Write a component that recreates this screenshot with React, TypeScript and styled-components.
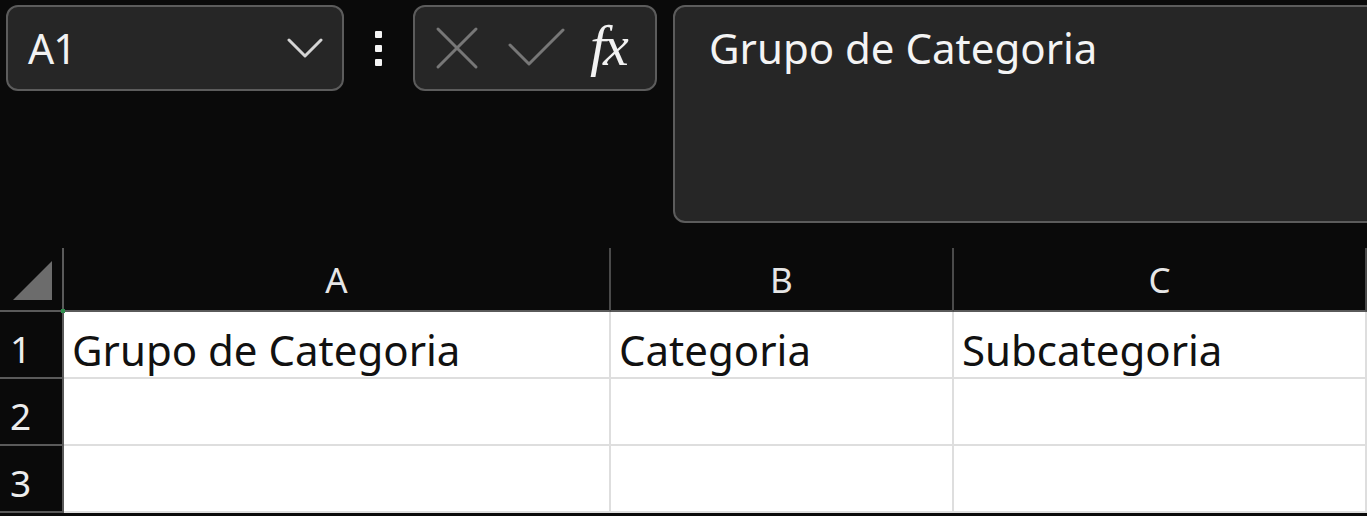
import React from 'react';
import styled, { createGlobalStyle } from 'styled-components';

const GlobalStyle = createGlobalStyle`
    html, body {
        margin: 0;
        padding: 0;
        background: #0a0a0a;
        overflow: hidden;
    }
    body {
        font-family: "Noto Sans", "Open Sans", sans-serif;
    }
`;

const Page = styled.div`
    width: 1367px;
    height: 516px;
    overflow: hidden;
    background: #0a0a0a;
`;

const TopBar = styled.div`
    height: 248px;
    display: flex;
    align-items: flex-start;
    padding: 5px 0 0 6px;
    box-sizing: border-box;
    & > * {
        flex-shrink: 0;
    }
`;

const NameBox = styled.div`
    width: 338px;
    height: 86px;
    box-sizing: border-box;
    border: 2px solid #5c5c5c;
    border-radius: 12px;
    background: #262626;
    display: flex;
    align-items: center;
    justify-content: space-between;
    padding: 0 19px 0 20px;
    color: #f2f2f2;
    font-size: 41px;
    letter-spacing: -1px;
`;

const DotsArea = styled.div`
    width: 69px;
    height: 86px;
    display: flex;
    flex-direction: column;
    align-items: center;
    justify-content: center;
    gap: 7px;
`;

const Dot = styled.span`
    width: 7px;
    height: 7px;
    background: #f4f4f4;
    border-radius: 1px;
`;

const FxBox = styled.div`
    width: 244px;
    height: 86px;
    box-sizing: border-box;
    border: 2px solid #5c5c5c;
    border-radius: 12px;
    background: #262626;
    display: flex;
    align-items: center;
    padding: 0 0 0 20px;
`;

const IconSlot = styled.div<{ $w: number }>`
    width: ${p => p.$w}px;
    display: flex;
    align-items: center;
`;

const FxLabel = styled.span`
    font-family: "Liberation Serif", "DejaVu Serif", serif;
    font-style: italic;
    font-size: 58px;
    color: #f2f2f2;
    line-height: 1;
    letter-spacing: -3px;
    margin-left: -2px;
    margin-top: -4px;
`;

const FormulaBar = styled.div`
    margin-left: 16px;
    width: 760px;
    height: 218px;
    box-sizing: border-box;
    border: 2px solid #5c5c5c;
    border-radius: 12px;
    background: #262626;
    padding: 16px 0 0 34px;
    color: #f4f4f4;
    font-size: 42px;
    line-height: 1.2;
`;

const Grid = styled.div`
    display: grid;
    grid-template-columns: 64px 547px 343px 1fr;
    grid-auto-rows: 67px;
    grid-template-rows: 64px;
`;

const Corner = styled.div`
    background: #0a0a0a;
    border-right: 2px solid #5a5a5a;
    border-bottom: 2px solid #5a5a5a;
    box-sizing: border-box;
    position: relative;
    display: flex;
    align-items: flex-end;
    padding: 0 0 9px 13px;
`;

const ColHead = styled.div`
    background: #0a0a0a;
    border-right: 2px solid #4a4a4a;
    border-bottom: 2px solid #5a5a5a;
    box-sizing: border-box;
    color: #e6e6e6;
    font-size: 35px;
    display: flex;
    align-items: flex-end;
    justify-content: center;
    padding-bottom: 13px;
    line-height: 1;
`;

const RowHead = styled.div`
    background: #0a0a0a;
    border-right: 2px solid #5a5a5a;
    border-bottom: 2px solid #5a5a5a;
    box-sizing: border-box;
    color: #ededed;
    font-size: 37px;
    display: flex;
    align-items: flex-end;
    padding: 0 0 10px 10px;
    line-height: 1;
`;

const Cell = styled.div`
    background: #ffffff;
    border-right: 2px solid #dedede;
    border-bottom: 2px solid #dedede;
    box-sizing: border-box;
    color: #111111;
    font-size: 42px;
    display: flex;
    align-items: flex-end;
    padding: 0 0 2px 8px;
    line-height: 1.2;
    white-space: nowrap;
    overflow: hidden;
`;

const SelectMark = styled.span`
    position: absolute;
    right: -3px;
    bottom: -3px;
    width: 4px;
    height: 4px;
    background: #2f8f4f;
`;

const Chevron = () => (
    <svg width="36" height="22" viewBox="0 0 36 22">
        <path d="M2 3 L18 19 L34 3" fill="none" stroke="#d4d4d4" strokeWidth="3" strokeLinecap="round" strokeLinejoin="round" />
    </svg>
);

const CrossIcon = () => (
    <svg width="44" height="44" viewBox="0 0 44 44">
        <path d="M3 3 L41 41 M41 3 L3 41" fill="none" stroke="#777777" strokeWidth="3" strokeLinecap="round" />
    </svg>
);

const CheckIcon = () => (
    <svg width="58" height="40" viewBox="0 0 58 40">
        <path d="M2 17 L21 36 L55 2" fill="none" stroke="#777777" strokeWidth="3" strokeLinecap="round" strokeLinejoin="round" />
    </svg>
);

const CornerTriangle = () => (
    <svg width="40" height="40" viewBox="0 0 40 40">
        <polygon points="0,39 39,39 39,0" fill="#6c6c6c" />
    </svg>
);

const columns = ['A', 'B', 'C'];
const rows = [
    ['Grupo de Categoria', 'Categoria', 'Subcategoria'],
    ['', '', ''],
    ['', '', ''],
];

const App = () => {
    return (
        <Page>
            <GlobalStyle />
            <TopBar>
                <NameBox>
                    <span>A1</span>
                    <Chevron />
                </NameBox>
                <DotsArea>
                    <Dot />
                    <Dot />
                    <Dot />
                </DotsArea>
                <FxBox>
                    <IconSlot $w={73}><CrossIcon /></IconSlot>
                    <IconSlot $w={84}><CheckIcon /></IconSlot>
                    <FxLabel>fx</FxLabel>
                </FxBox>
                <FormulaBar>Grupo de Categoria</FormulaBar>
            </TopBar>
            <Grid>
                <Corner>
                    <CornerTriangle />
                    <SelectMark />
                </Corner>
                {columns.map(c => <ColHead key={c}>{c}</ColHead>)}
                {rows.map((r, i) => (
                    <React.Fragment key={i}>
                        <RowHead>{i + 1}</RowHead>
                        {r.map((v, j) => <Cell key={j}>{v}</Cell>)}
                    </React.Fragment>
                ))}
            </Grid>
        </Page>
    );
};

export default App;
